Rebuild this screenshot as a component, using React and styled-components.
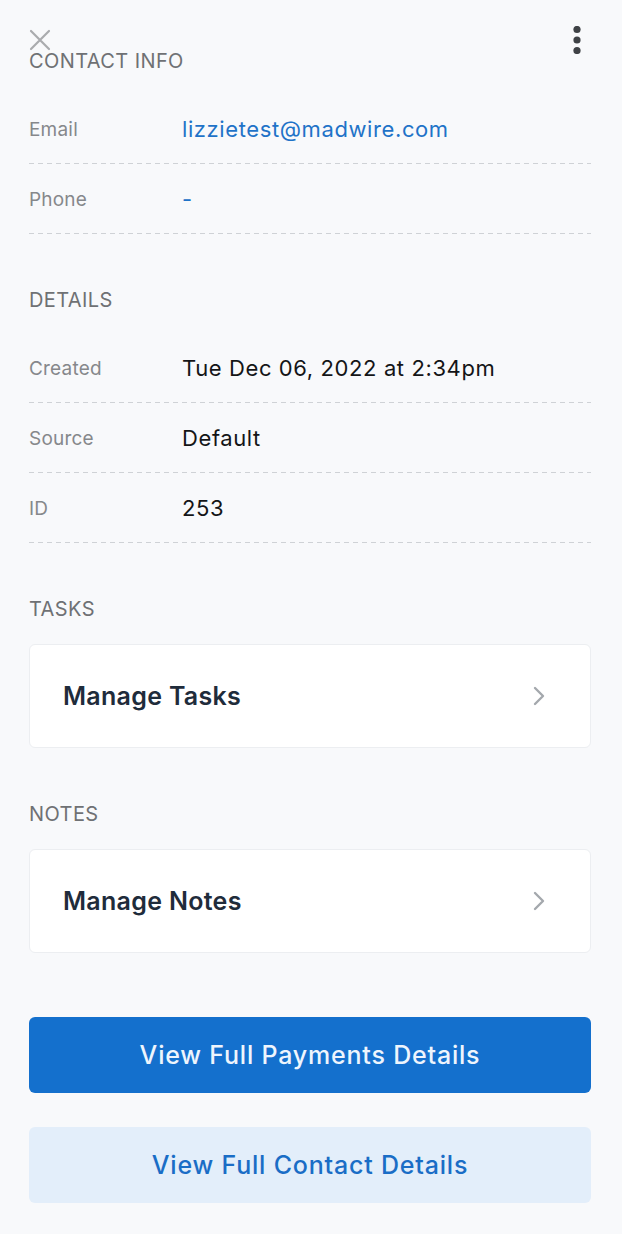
import React from 'react';
import styled, { createGlobalStyle } from 'styled-components';

const GlobalStyle = createGlobalStyle`
    * {
        box-sizing: border-box;
    }

    body {
        margin: 0;
        background-color: #f8f9fb;
        font-family: 'Inter', 'Liberation Sans', sans-serif;
        -webkit-font-smoothing: antialiased;
    }
`;

const contactInfo = [
    { label: 'Email', value: 'lizzietest@madwire.com', link: true },
    { label: 'Phone', value: '-', link: true },
];

const details = [
    { label: 'Created', value: 'Tue Dec 06, 2022 at 2:34pm' },
    { label: 'Source', value: 'Default' },
    { label: 'ID', value: '253' },
];

const CloseIcon = () => (
    <svg width="22" height="22" viewBox="0 0 22 22" fill="none">
        <path d="M2 2L20 20M20 2L2 20" stroke="#a9abae" strokeWidth="2.2" strokeLinecap="round" />
    </svg>
);

const KebabIcon = () => (
    <svg width="10" height="28" viewBox="0 0 10 28">
        <circle cx="5" cy="3.5" r="3.6" fill="#3f4246" />
        <circle cx="5" cy="14" r="3.6" fill="#3f4246" />
        <circle cx="5" cy="24.5" r="3.6" fill="#3f4246" />
    </svg>
);

const ChevronIcon = () => (
    <svg width="14" height="20" viewBox="0 0 14 20" fill="none">
        <path d="M3 2L11 10L3 18" stroke="#a4a8ad" strokeWidth="2.4" strokeLinecap="round" strokeLinejoin="round" />
    </svg>
);

const App = () => {
    return (
        <>
            <GlobalStyle />
            <Page>
                <Toolbar>
                    <IconButton aria-label="Close">
                        <CloseIcon />
                    </IconButton>
                    <IconButton aria-label="More">
                        <KebabIcon />
                    </IconButton>
                </Toolbar>

                <Section>
                    <Heading>CONTACT INFO</Heading>
                    <Rows>
                        {contactInfo.map((row) => (
                            <Row key={row.label}>
                                <Label>{row.label}</Label>
                                <Value link={row.link ? 1 : 0}>{row.value}</Value>
                            </Row>
                        ))}
                    </Rows>
                </Section>

                <Section>
                    <Heading>DETAILS</Heading>
                    <Rows>
                        {details.map((row) => (
                            <Row key={row.label}>
                                <Label>{row.label}</Label>
                                <Value>{row.value}</Value>
                            </Row>
                        ))}
                    </Rows>
                </Section>

                <Section>
                    <Heading>TASKS</Heading>
                    <Card>
                        <span>Manage Tasks</span>
                        <ChevronIcon />
                    </Card>
                </Section>

                <Section>
                    <Heading>NOTES</Heading>
                    <Card>
                        <span>Manage Notes</span>
                        <ChevronIcon />
                    </Card>
                </Section>

                <Actions>
                    <Button variant="primary">View Full Payments Details</Button>
                    <Button variant="secondary">View Full Contact Details</Button>
                </Actions>
            </Page>
        </>
    );
};

export default App;

const Page = styled.div`
    display: flex;
    flex-direction: column;
    width: 622px;
    min-height: 1234px;
    padding: 29px 31px 0 29px;
    background-color: #f8f9fb;
`;

const Toolbar = styled.div`
    display: flex;
    justify-content: space-between;
    align-items: center;
    height: 22px;
    margin-bottom: -2px;
    margin-right: 9px;
`;

const IconButton = styled.button`
    display: flex;
    align-items: center;
    justify-content: center;
    padding: 0;
    border: none;
    background: none;
    cursor: pointer;
`;

const Section = styled.section`
    display: flex;
    flex-direction: column;
    & + & {
        margin-top: 54px;
    }
`;

const Heading = styled.h2`
    margin: 0 0 21px;
    font-size: 20px;
    line-height: 24px;
    font-weight: 400;
    letter-spacing: 0.4px;
    color: #6f7174;
`;

const Rows = styled.div`
    display: flex;
    flex-direction: column;
`;

const Row = styled.div`
    display: grid;
    grid-template-columns: 153px 1fr;
    align-items: center;
    height: 70px;
    background-image: repeating-linear-gradient(
        to right,
        #cfd2d6 0 5px,
        transparent 5px 9px
    );
    background-size: 100% 1px;
    background-repeat: no-repeat;
    background-position: bottom left;
`;

const Label = styled.span`
    font-size: 19px;
    color: #86888b;
    letter-spacing: 0.2px;
`;

const Value = styled.span`
    font-size: 22px;
    letter-spacing: 0.6px;
    color: ${({ link }) => (link ? '#1f73c8' : '#141517')};
`;

const Card = styled.div`
    display: flex;
    align-items: center;
    justify-content: space-between;
    height: 104px;
    margin-top: 2px;
    padding: 0 44px 0 33px;
    background-color: #fff;
    border: 1px solid #eceef1;
    border-radius: 6px;
    cursor: pointer;

    span {
        font-size: 25px;
        font-weight: 600;
        letter-spacing: 0.3px;
        color: #1f2c3b;
    }
`;

const Actions = styled.div`
    display: flex;
    flex-direction: column;
    gap: 34px;
    margin-top: 64px;
`;

const Button = styled.button`
    height: 76px;
    border: none;
    border-radius: 6px;
    font-family: inherit;
    font-size: 25px;
    font-weight: 500;
    letter-spacing: 0.8px;
    cursor: pointer;
    background-color: ${({ variant }) => (variant === 'primary' ? '#1470cd' : '#e3eefa')};
    color: ${({ variant }) => (variant === 'primary' ? '#eef5fd' : '#1a6dc6')};
`;
